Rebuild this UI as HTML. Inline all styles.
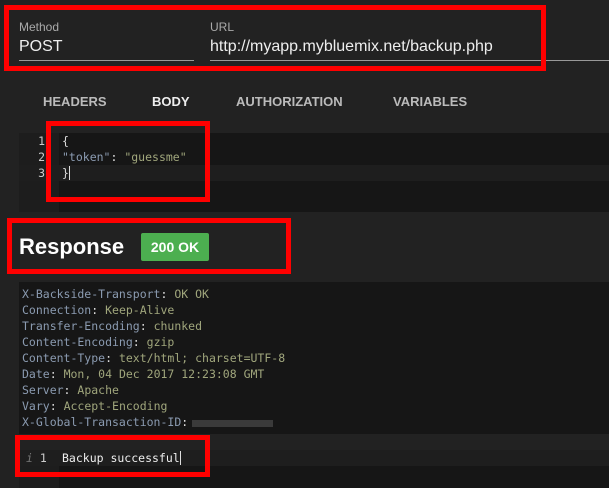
<!DOCTYPE html>
<html><head><meta charset="utf-8"><style>
*{margin:0;padding:0;box-sizing:border-box}
body{width:609px;height:488px;background:#222;position:relative;overflow:hidden;font-family:"Liberation Sans",sans-serif;color:#ddd}
.a{position:absolute}
.lbl{font-size:12px;color:#aaa}
.val{font-size:16px;color:#eee}
.ul{height:1px;background:#999}
.tab{font-size:13px;font-weight:bold;color:#bbb;top:94px}
.red{border:5px solid #f00}
.mono{font-family:"DejaVu Sans Mono",monospace;font-size:11.5px;line-height:16px}
.k{color:#8b9bb1}.v{color:#a0a67c}
</style></head><body>
<div class="a lbl" style="left:19px;top:20px">Method</div>
<div class="a val" style="left:19px;top:38px">POST</div>
<div class="a ul" style="left:19px;top:60px;width:175px"></div>
<div class="a lbl" style="left:210px;top:20px">URL</div>
<div class="a val" style="left:210px;top:38px">http://myapp.mybluemix.net/backup.php</div>
<div class="a ul" style="left:210px;top:60px;width:399px"></div>

<div class="a tab" style="left:43px">HEADERS</div>
<div class="a tab" style="left:152px;color:#eee">BODY</div>
<div class="a tab" style="left:236px">AUTHORIZATION</div>
<div class="a tab" style="left:393px">VARIABLES</div>

<div class="a" style="left:19px;top:133px;width:590px;height:79px;background:#161616"></div>
<div class="a" style="left:19px;top:133px;width:40px;height:79px;background:#1d1d1d"></div>
<div class="a" style="left:19px;top:165px;width:590px;height:16px;background:#1e1e1e"></div>
<div class="a mono" style="left:19px;top:133px;width:26px;text-align:right;color:#ccc">1<br>2<br>3</div>
<div class="a mono" style="left:62px;top:133px;color:#ddd">{<br><span class="k">"token"</span>: <span class="v">"guessme"</span><br>}<span style="border-left:1px solid #ddd"></span></div>
<div class="a red" style="left:46px;top:121px;width:164px;height:81px"></div>

<div class="a" style="left:19px;top:234px;font-size:22px;font-weight:bold;color:#fff">Response</div>
<div class="a" style="left:141px;top:233px;width:68px;height:28px;background:#4caf50;color:#fff;font-weight:bold;font-size:14px;line-height:28px;text-align:center;border-radius:2px">200 OK</div>
<div class="a red" style="left:7px;top:218px;width:284px;height:56px"></div>

<div class="a" style="left:19px;top:282px;width:590px;height:152px;background:#161616"></div>
<div class="a mono" style="left:22px;top:286px">
<span class="k">X-Backside-Transport</span>: <span class="v">OK OK</span><br>
<span class="k">Connection</span>: <span class="v">Keep-Alive</span><br>
<span class="k">Transfer-Encoding</span>: <span class="v">chunked</span><br>
<span class="k">Content-Encoding</span>: <span class="v">gzip</span><br>
<span class="k">Content-Type</span>: <span class="v">text/html; charset=UTF-8</span><br>
<span class="k">Date</span>: <span class="v">Mon, 04 Dec 2017 12:23:08 GMT</span><br>
<span class="k">Server</span>: <span class="v">Apache</span><br>
<span class="k">Vary</span>: <span class="v">Accept-Encoding</span><br>
<span class="k">X-Global-Transaction-ID</span>:</div>
<div class="a" style="left:192px;top:420px;width:81px;height:7px;background:#3a3a3a"></div>

<div class="a" style="left:19px;top:450px;width:590px;height:38px;background:#161616"></div>
<div class="a" style="left:19px;top:450px;width:40px;height:38px;background:#1d1d1d"></div>
<div class="a" style="left:19px;top:450px;width:590px;height:16px;background:#1e1e1e"></div>
<div class="a mono" style="left:26px;top:450px;color:#ccc"><i style="color:#777">i</i> 1</div>
<div class="a mono" style="left:62px;top:450px;color:#eee">Backup successful<span style="border-left:1px solid #ddd"></span></div>
<div class="a red" style="left:15px;top:435px;width:195px;height:42px"></div>
<div class="a red" style="left:4px;top:5px;width:542px;height:66px"></div>
</body></html>
